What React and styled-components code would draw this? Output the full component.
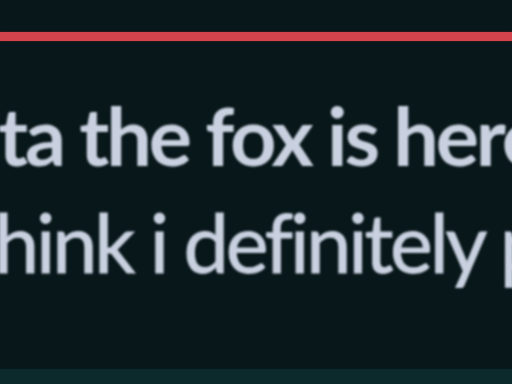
import React from "react";
import styled, { createGlobalStyle } from "styled-components";

const Global = createGlobalStyle`
  html, body {
    margin: 0;
    padding: 0;
    background: #08181a;
    overflow: hidden;
  }
`;

export default function App() {
  return (
    <>
      <Global />
      <Screen>
        <Divider />
        <Message>
          <Author>ta the fox is here</Author>
          <Body>hink i definitely p</Body>
        </Message>
        <Composer />
      </Screen>
    </>
  );
}

const Screen = styled.div`
  width: 512px;
  height: 384px;
  display: flex;
  flex-direction: column;
  background: #08181a;
  overflow: hidden;
  padding-top: 32px;
  box-sizing: border-box;
`;

const Divider = styled.div`
  height: 9px;
  background: #d3434b;
  box-shadow: 0 0 2px #5a1a20;
  flex-shrink: 0;
`;

const Message = styled.div`
  flex: 1;
  display: flex;
  flex-direction: column;
  padding-top: 40px;
  white-space: nowrap;
  font-family: Lato, "Open Sans", sans-serif;
  font-variant-ligatures: none;
  color: #c9d1e0;
  font-size: 81px;
  line-height: 107px;
  letter-spacing: -3.2px;
  filter: blur(0.8px);
`;

const Author = styled.div`
  font-weight: 700;
  margin-left: -2px;
`;

const Body = styled.div`
  font-weight: 400;
  margin-left: -6px;
  -webkit-text-stroke: 1px #c3cbdb;
`;

const Composer = styled.div`
  height: 15px;
  flex-shrink: 0;
  background: #0c292b;
`;
